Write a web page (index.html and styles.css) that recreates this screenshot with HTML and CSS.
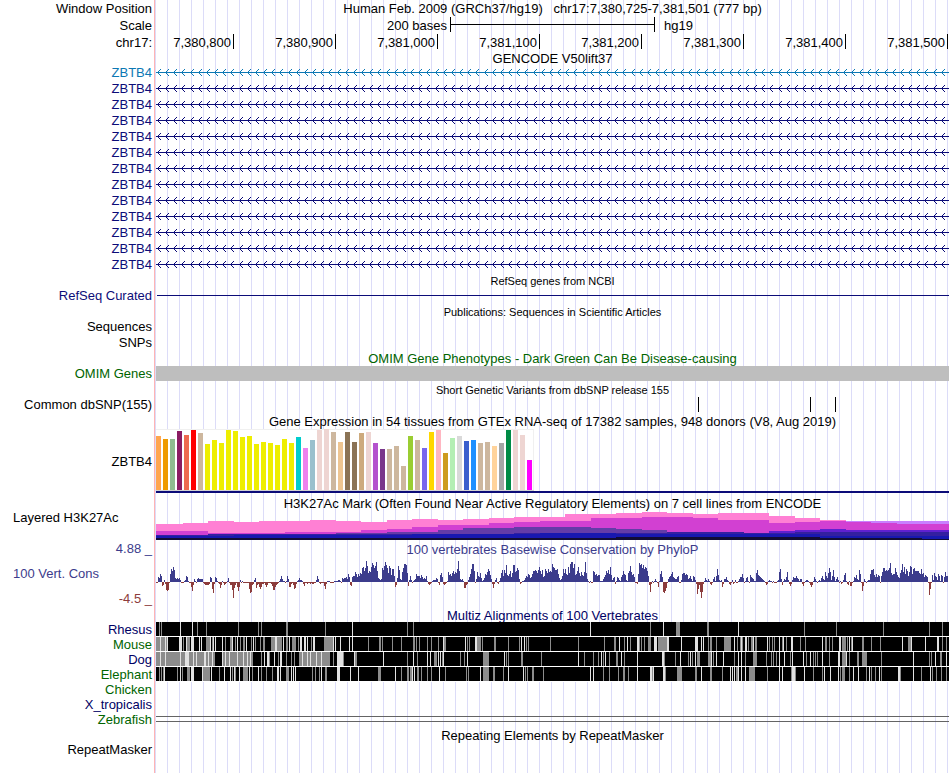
FILE: index.html
```html
<!DOCTYPE html>
<html lang="en">
<head>
<meta charset="utf-8">
<title>chr17:7,380,725-7,381,501 genome browser</title>
<link rel="stylesheet" href="styles.css">
</head>
<body>
<main class="browser">
  <section class="ruler">
    <div class="row head"><span class="label">Window Position</span><h1 class="title">Human Feb. 2009 (GRCh37/hg19) &nbsp; chr17:7,380,725-7,381,501 (777 bp)</h1></div>
    <div class="row head"><span class="label">Scale</span><div class="scale"><span>200 bases</span><i class="scalebar"></i><span>hg19</span></div></div>
    <div class="row head"><span class="label">chr17:</span><div class="axis"><span>7,380,800</span><span>7,380,900</span><span>7,381,000</span><span>7,381,100</span><span>7,381,200</span><span>7,381,300</span><span>7,381,400</span><span>7,381,500</span></div></div>
  </section>

  <section>
    <div class="row tight"><h2 class="title">GENCODE V50lift37</h2></div>
    <div class="row alt"><span class="label">ZBTB4</span><svg class="plot strand"></svg></div>
    <div class="row navy"><span class="label">ZBTB4</span><svg class="plot strand"></svg></div>
    <div class="row navy"><span class="label">ZBTB4</span><svg class="plot strand"></svg></div>
    <div class="row navy"><span class="label">ZBTB4</span><svg class="plot strand"></svg></div>
    <div class="row navy"><span class="label">ZBTB4</span><svg class="plot strand"></svg></div>
    <div class="row navy"><span class="label">ZBTB4</span><svg class="plot strand"></svg></div>
    <div class="row navy"><span class="label">ZBTB4</span><svg class="plot strand"></svg></div>
    <div class="row navy"><span class="label">ZBTB4</span><svg class="plot strand"></svg></div>
    <div class="row navy"><span class="label">ZBTB4</span><svg class="plot strand"></svg></div>
    <div class="row navy"><span class="label">ZBTB4</span><svg class="plot strand"></svg></div>
    <div class="row navy"><span class="label">ZBTB4</span><svg class="plot strand"></svg></div>
    <div class="row navy"><span class="label">ZBTB4</span><svg class="plot strand"></svg></div>
    <div class="row navy"><span class="label">ZBTB4</span><svg class="plot strand"></svg></div>
  </section>

  <section>
    <div class="row short"><h2 class="title small">RefSeq genes from NCBI</h2></div>
    <div class="row navy"><span class="label">RefSeq Curated</span><div class="gene-line"></div></div>
  </section>

  <section>
    <div class="row short"><h2 class="title small">Publications: Sequences in Scientific Articles</h2></div>
    <div class="row"><span class="label">Sequences</span></div>
    <div class="row short"><span class="label">SNPs</span></div>
  </section>

  <section class="green">
    <div class="row"><h2 class="title">OMIM Gene Phenotypes - Dark Green Can Be Disease-causing</h2></div>
    <div class="row short"><span class="label">OMIM Genes</span><div class="omim"></div></div>
  </section>

  <section>
    <div class="row"><h2 class="title small">Short Genetic Variants from dbSNP release 155</h2></div>
    <div class="row"><span class="label">Common dbSNP(155)</span><svg class="plot" id="snps" viewBox="0 0 793 16" preserveAspectRatio="none"></svg></div>
  </section>

  <section>
    <div class="row"><h2 class="title">Gene Expression in 54 tissues from GTEx RNA-seq of 17382 samples, 948 donors (V8, Aug 2019)</h2></div>
    <div class="row expression"><span class="label">ZBTB4</span><svg class="plot" id="gtex" viewBox="0 0 793 66" preserveAspectRatio="none"></svg></div>
  </section>

  <section>
    <div class="row"><h2 class="title">H3K27Ac Mark (Often Found Near Active Regulatory Elements) on 7 cell lines from ENCODE</h2></div>
    <div class="row marks"><span class="label left">Layered H3K27Ac</span><svg class="plot" id="h3k" viewBox="0 0 793 30" preserveAspectRatio="none"></svg></div>
  </section>

  <section class="phylo">
    <div class="row"><span class="label">4.88 _</span><h2 class="title">100 vertebrates Basewise Conservation by PhyloP</h2></div>
    <div class="row wiggle"><div class="label pair"><span class="name">100 Vert. Cons</span><span class="low">-4.5 _</span></div><svg class="plot" id="wiggle" viewBox="0 0 793 50" preserveAspectRatio="none"></svg></div>
  </section>

  <section class="species">
    <div class="row"><h2 class="title">Multiz Alignments of 100 Vertebrates</h2></div>
    <div class="row"><span class="label">Rhesus</span><svg class="plot align" data-species="rhesus"></svg></div>
    <div class="row green"><span class="label">Mouse</span><svg class="plot align" data-species="mouse"></svg></div>
    <div class="row"><span class="label">Dog</span><svg class="plot align" data-species="dog"></svg></div>
    <div class="row green"><span class="label">Elephant</span><svg class="plot align" data-species="elephant"></svg></div>
    <div class="row green"><span class="label">Chicken</span></div>
    <div class="row"><span class="label">X_tropicalis</span></div>
    <div class="row green"><span class="label">Zebrafish</span><div class="double"></div></div>
  </section>

  <section>
    <div class="row short"><h2 class="title">Repeating Elements by RepeatMasker</h2></div>
    <div class="row short"><span class="label">RepeatMasker</span></div>
  </section>
</main>
<script src="tracks.js"></script>
</body>
</html>
```
FILE: styles.css
```css
body {
  margin: 0;
  background: #fff;
  color: #000;
  font: 13px/16px "Liberation Sans", Arial, sans-serif;
}

.browser {
  min-height: 100vh;
  margin-right: 1px;
  background:
    linear-gradient(to right, #fff 154px, #ffb4b4 154px 155px, transparent 155px),
    repeating-linear-gradient(to right, transparent 0 11px, #dcdcf8 11px 12px);
}

.row {
  display: grid;
  grid-template-columns: 152px minmax(0, 1fr);
  column-gap: 4px;
  height: 16px;
}

.row > * { grid-row: 1; }
.row.head { height: 17px; line-height: 17px; }
.row.short { height: 15px; line-height: 15px; }
.row.tight { height: 14px; line-height: 14px; }
.label { grid-column: 1; text-align: right; white-space: nowrap; }
.label.left { padding-left: 13px; text-align: left; }

.title,
.plot,
.scale,
.axis,
.gene-line,
.omim,
.double { grid-column: 2; }

.title {
  margin: 0;
  font-size: 13px;
  font-weight: normal;
  text-align: center;
  white-space: nowrap;
}
h2.title { padding-top: 1px; }
.title.small { font-size: 11px; }

.plot { display: block; width: 100%; height: 100%; shape-rendering: crispEdges; }

.alt { color: #0c78b4; }
.navy { color: #0c0c78; }
.green, .species .green { color: #006400; }
.phylo { color: #3c3c8c; }
.species { color: #000064; }

.scale {
  display: grid;
  grid-template-columns: 294fr 205fr 294fr;
}
.scale span:first-child { padding-right: 3px; text-align: right; }
.scale span:last-child { padding-left: 9px; }
.scalebar {
  height: 15px;
  box-sizing: border-box;
  border: solid #000;
  border-width: 0 1px;
  background: linear-gradient(#000, #000) 0 7px / 100% 1px no-repeat;
}

.axis {
  display: grid;
  grid-template-columns: 78fr repeat(7, 102fr) 1fr;
}
.axis span {
  height: 15px;
  padding-right: 2px;
  border-right: 1px solid #000;
  text-align: right;
}

.gene-line { height: 1px; margin: 7px 0 0 1px; background: #0c0c78; }
.omim { height: 15px; background: #bebebe; }
.expression { height: 66px; line-height: 66px; }
.marks { height: 30px; line-height: 14px; }
.wiggle { height: 50px; }
.pair { display: flex; flex-direction: column; justify-content: space-between; padding-top: 9px; }
.pair .name { padding-left: 13px; text-align: left; }
.low { color: #8c3c3c; }
.species .row { height: 15px; line-height: 15px; }
.double { height: 4px; margin-top: 4px; border: solid #646464; border-width: 1px 0; }
```
FILE: tracks.js
```javascript
const NS = "http://www.w3.org/2000/svg";
const LEFT = 156;
const WIDTH = 793;

function rect(svg, x, y, w, h, fill) {
  const r = document.createElementNS(NS, "rect");
  Object.entries({ x, y, width: w, height: h, fill }).forEach(([k, v]) => r.setAttribute(k, v));
  svg.appendChild(r);
}

function path(svg, d, fill) {
  const p = document.createElementNS(NS, "path");
  p.setAttribute("d", d);
  p.setAttribute("fill", fill);
  svg.appendChild(p);
}

function frame(svg, h) {
  svg.setAttribute("viewBox", `0 0 ${WIDTH} ${h}`);
  svg.setAttribute("preserveAspectRatio", "none");
}

/* Minus-strand arrows, one every eight bases */
let arrows = "M0 7h793v1h-793z";
for (let i = 0; i < 97; i++) {
  const x = Math.round(1 + i * 8 * WIDTH / 777);
  for (let k = 1; k < 4; k++) arrows += `M${x + k} ${7 - k}h1v1h-1zM${x + k} ${7 + k}h1v1h-1z`;
}
document.querySelectorAll(".strand").forEach(svg => {
  frame(svg, 16);
  path(svg, arrows, "currentColor");
});

/* Variants */
[698, 810, 835].forEach(x => rect(document.getElementById("snps"), x - LEFT, 0, 1, 15, "#000"));

/* Expression: height and colour per tissue */
const tan = "#cdb79e", rose = "#eed5d2", yellow = "#eeee00";
const tissues = [
  [54, "#ffa54f"], [51, "#ee9a00"], [51, "#8fbc8f"], [59, "#8b1c62"], [55, "#ee6a50"], [60, "#ff0000"], [57, tan],
  [46, yellow], [50, yellow], [47, yellow], [60, yellow], [59, yellow], [53, yellow], [54, yellow], [46, yellow],
  [48, yellow], [47, yellow], [45, yellow], [51, yellow], [47, yellow], [53, "#00cdcd"], [42, "#ee82ee"],
  [50, "#9ac0cd"], [60, rose], [61, rose], [58, tan], [48, "#eec591"], [58, "#8b7355"], [48, "#8b7355"],
  [57, "#cdaa7d"], [58, rose], [47, "#b452cd"], [41, "#7a378b"], [41, tan], [44, tan], [24, tan],
  [54, "#9acd32"], [50, tan], [42, "#7a67ee"], [58, "#ffd700"], [60, "#ffb6c1"], [37, "#cd9b1d"],
  [52, "#b4eeb4"], [54, "#d9d9d9"], [49, "#3a5fcd"], [50, "#1e90ff"], [47, tan], [48, tan],
  [44, "#ffd39b"], [47, "#a6a6a6"], [60, "#008b45"], [60, rose], [55, rose], [30, "#ff00ff"]
];
const gtex = document.getElementById("gtex");
rect(gtex, 0, 0, 378, 62, "#f0f0f0");
rect(gtex, 0, 1, 377, 60, "#fff");
rect(gtex, 0, 61, 378, 1, "#d2d2d2");
tissues.forEach(([h, c], i) => rect(gtex, i * 7, 61 - h, 5, h, c));
rect(gtex, 0, 62, WIDTH, 2, "#0c0c78");

/* Layered histogram: each layer lists [bin start, top] and ends at its last entry */
const layers = [
  ["#c880ff", [[846, 521], [949, 521]]],
  ["#ff80d4", [[156, 524], [183, 523], [208, 521], [234, 522], [259, 521], [310, 520], [336, 521], [361, 522], [387, 520], [412, 519], [438, 520], [463, 519], [489, 518], [514, 517], [565, 514], [616, 513], [642, 512], [667, 513], [693, 514], [718, 513], [769, 516], [795, 518], [820, 520], [846, 520]]],
  ["#d240d2", [[156, 531], [208, 533], [285, 532], [361, 530], [387, 529], [412, 527], [438, 525], [489, 523], [514, 522], [540, 521], [591, 518], [642, 517], [693, 518], [718, 520], [769, 523], [795, 522], [820, 521], [846, 522], [871, 523], [897, 524], [949, 524]]],
  ["#643ca8", [[336, 533], [387, 532], [438, 530], [463, 528], [514, 527], [591, 528], [616, 529], [642, 530], [667, 530]]],
  ["#6020d0", [[769, 531], [795, 530], [820, 529], [846, 530], [949, 530]]],
  ["#3420a0", [[156, 535], [208, 534], [310, 534], [361, 534], [514, 533], [667, 532], [744, 533], [795, 532], [949, 532]]],
  ["#1818b0", [[156, 536], [234, 535], [310, 535], [412, 534], [540, 533], [616, 534], [744, 534], [820, 536], [949, 536]]],
  ["#120c34", [[156, 538], [540, 538], [616, 537], [820, 538], [922, 539], [949, 539]]]
];
const h3k = document.getElementById("h3k");
layers.forEach(([color, steps]) => {
  for (let i = 0; i < steps.length - 1; i++) {
    const [x, top] = steps[i];
    rect(h3k, x - LEFT, top - 511, steps[i + 1][0] - x, 540 - top, color);
  }
});

/* Conservation score per pixel column */
const scores = [
  -1,-1,5,4,8,6,-4,-3,2,-2,-8,-9,-8,-1,8,13,11,15,12,4,3,4,3,4,2,-1,-1,-1,1,2,6,5,1,-1,
  -1,-5,-9,-3,3,1,-1,3,4,3,3,3,3,-1,-2,-3,-3,-3,-3,-2,5,4,-7,-11,-2,5,4,1,-1,-2,-6,-3,1,
  -1,-3,-2,-1,1,4,-1,-3,-3,-8,-16,-6,-3,-1,-5,-9,-5,2,-1,1,-1,-1,-1,-1,-1,-1,-7,-11,-10,-3,-2,2,4,-6,-3,-2,-5,-7,-5,-2,
  -2,-1,-3,-5,-3,-1,-1,-1,-2,-4,-8,-8,-5,-3,-2,-1,1,3,6,3,1,1,-1,1,6,3,-5,-5,-2,-1,-3,-7,-6,-2,1,2,4,2,2,1,
  -2,-4,-1,-1,-2,-1,-1,-2,-1,-2,-2,-1,-1,2,6,3,-1,-2,-1,-1,-1,-4,-7,-2,1,1,1,-1,-1,-1,-1,1,1,1,1,2,2,1,-1,4,
  3,4,4,5,3,8,5,-3,-4,5,6,6,10,8,5,8,6,9,8,14,15,11,14,21,16,9,11,10,15,19,17,14,16,20,11,4,3,2,3,14,12,16,20,17,14,9,16,14,7,13,13,6,-5,-3,4,16,12,3,2,10,14,18,18,17,9,-4,2,6,2,-1,1,2,3,8,6,6,6,
  4,7,5,3,4,3,6,1,-2,-3,-2,-1,1,2,2,2,4,3,-1,-3,7,9,5,-2,-3,-2,-1,1,10,7,8,6,9,11,8,10,9,13,21,11,3,2,3,1,-6,-6,-3,-2,2,5,8,13,18,18,11,-1,3,10,6,5,9,4,1,2,4,8,7,10,13,11,7,3,-2,-6,-2,2,4,-1,-2,1,
  4,9,12,6,12,9,17,7,6,8,11,5,9,17,17,10,11,14,12,3,-2,-1,1,1,2,4,6,5,8,7,4,5,8,11,11,12,11,9,12,15,11,8,12,5,6,13,11,9,13,10,11,10,18,15,14,12,12,13,8,4,2,3,6,13,9,13,8,7,15,9,18,20,20,14,18,7,8,11,15,9,6,10,7,6,10,20,9,3,1,-1,1,-1,-1,
  11,10,7,8,6,7,7,1,1,1,3,5,7,11,9,12,8,15,7,2,4,5,-2,1,5,4,2,1,5,7,11,8,7,2,1,9,11,16,10,7,8,5,-1,-1,-2,8,19,17,18,14,17,13,15,14,11,6,-3,-10,-2,1,-1,1,3,1,-1,-5,1,8,11,5,-10,-11,-9,-6,-1,3,5,6,8,10,5,4,3,3,5,6,
  -1,-1,2,8,9,9,7,8,7,3,4,6,3,1,6,5,2,-2,-12,-7,-3,-10,-16,-10,-2,1,4,2,1,3,1,-2,-3,-1,3,5,1,6,13,7,2,1,2,-5,-2,3,3,5,2,1,-2,-3,-1,2,-2,-1,2,-1,-1,1,3,5,5,8,4,-1,1,4,5,1,-1,7,5,4,3,1,1,9,12,7,6,5,4,3,2,1,-1,-3,-2,1,
  2,1,1,-1,1,-1,-1,-1,1,2,10,13,3,-3,1,3,2,5,10,2,-2,-4,-2,2,5,4,4,6,4,3,1,3,3,-2,-4,-1,1,2,2,1,-1,-3,-5,-3,1,5,3,1,-1,1,2,1,4,6,3,2,10,6,4,9,14,10,2,6,12,5,1,3,5,2,-1,1,-2,-1,2,7,9,1,-2,-3,1,-4,-4,-1,1,5,4,7,3,2,12,8,
  -1,-9,-4,3,1,-1,1,2,2,8,12,12,13,7,5,8,5,7,6,-1,6,10,14,14,11,12,11,12,14,19,9,7,8,8,14,10,7,5,4,9,12,18,10,15,8,13,11,6,10,16,15,8,13,14,11,11,11,11,9,8,13,8,9,5,7,6,5,-1,-13,-7,-1,7,2,9,6,5,2,8,6,1,7,6,-1,5,10,6,6
];
const wiggle = document.getElementById("wiggle");
let up = "", down = "";
scores.slice(0, WIDTH).forEach((v, x) => {
  if (v > 0) up += `M${x} ${25 - v}h1v${v}h-1z`;
  else down += `M${x} 25h1v${-v}h-1z`;
});
path(wiggle, up, "#3c3c8c");
path(wiggle, down, "#8c3c3c");

/* Alignment gaps: position, shade (g = partial, L = unaligned), width */
const alignments = {
  rhesus: "159g 161g 180L 192L 197g 206g 238g 258g 261g 286g2 325g 352L 407g 413g 590L 650g 663L 676g4 707g2 738L 804g 836g 883g 929g 942g",
  mouse: "156g4 160L 161g4 165L 166g 167L 179L3 183g 186L 187g3 191L3 199L 201L 206g4 210L 212g 213L 215L 222L 225g 230g2 232L 235g 237L 240g 243g2 246L 251g 253L 255g 260g 263g2 271g4 275L2 277g5 283L 286g2 289L 292g4 298g 300L2 304L2 307L 311g 313L2 324g9 333L 335L 340L 349L 352L 368g 379g2 382g 392g 401g 413g2 416g 419g 427g 431g 438g 443L 444g2 465L 467g 469g 475L2 477g4 482g 494g2 508g 519g 521L 524L 526g 528g 550g 578g 604g 614g2 619L 624g 627L 630g 637L2 639g 641g 644g 648g3 654L2 656L 658g9 667L2 681L 695L3 701L 703L 708g 710g2 716g 724g7 734L 737g 740g 741L 742g 745L2 748g 751g2 753L 755g2 767L 769g 772g 774g 779L 782g 783L 786g 791L2 800g 805g 822L 825g2 829g 832g 839L2 842g4 847g 849L 851g 852L 862g2 871g 880g 902L 908g3 911L 925L 937L2 942g 946g",
  dog: "156g59 160L 165L 180L 185L4 193L 196L 204L2 208L 212L 222g31 222L 225L 229L 237L 243L 247L 250L 261g 264L 267L2 269g 274L 278g 280L2 286g 291g 294g 299g31 302L 307L 310L 316L 321L 333g 337L6 343g 354L 355g2 383L 407g 413L 417g 427L 430L 434g3 438L 440L 442g 443L 460g 464g 467L 483g6 504L 506g 508g 521g2 541g 578L 584g 593g 598g 601L 603g 605L 609g 616g2 621L 624g 637L 662L2 664g 675g 680L 688g 690L 692g 695L 697g3 708g3 711L 713g 716L 723L 734g 738L 741L 745g 753g4 766g 771g 773g 776g 779L 784L 790g 792L 803L 806g 810L 813g 815g 817g 822L 829g 838L2 842g4 846L 849g 857g2 862g5 881g 913L 929g 931g 935L 940g2 946L",
  elephant: "159g 161g 163g 164L 177g 180L 182g 187g3 191L3 202L 203g7 211L 219g 224L 230L 232g 234L 235g 239L 243g5 249L 252g 258L 261g 266g 272g 277L2 280L 286g3 291L 293L 295L 312g 315g 319g 321L 325g2 337L3 350L 358L 378g3 395L 401g 407g2 412L 417L 410g2 414L 417g2 421g 427g 431g 439L 445g 466g 468g 480L 483g6 493g2 503g 508L 523L 525g 527g 532g2 543g 590L 593L 603g 609g 618g 623g2 628g 637L 650L2 652g 653L 663L2 665g 677g3 680g2 695g2 701L 710g2 722g 730L 732L 734L 736g2 738L 741L 745L 749g6 767g 779L 782L 791g 792L3 795g 804L 813g 822g 824L 830L 838L 840g 842g3 849g 853L 858L 866g 869L 871g 875g 879L 881g 898L2 900g 913L 921g 930L 932g 936g 941g 946g"
};
document.querySelectorAll(".align").forEach(svg => {
  frame(svg, 15);
  rect(svg, 0, 0, WIDTH, 15, "#fff");
  rect(svg, 0, 0, WIDTH, 14, "#000");
  alignments[svg.dataset.species].split(" ").forEach(item => {
    const [, x, shade, w] = item.match(/(\d+)([gL])(\d*)/);
    rect(svg, x - LEFT, 0, Number(w || 1), 14, shade === "g" ? "#8c8c8c" : "#e1e1e1");
  });
});
```
